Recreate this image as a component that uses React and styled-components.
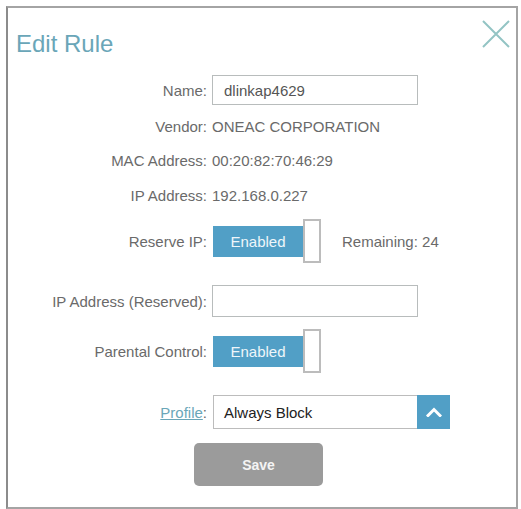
import React from 'react'
import styled, { createGlobalStyle } from 'styled-components'

const GlobalStyle = createGlobalStyle`
  html, body {
    margin: 0;
    padding: 0;
    background: #ffffff;
  }
  body {
    font-family: "Liberation Sans", Arial, sans-serif;
  }
`

const App = () => {
  return (
    <>
      <GlobalStyle />
      <Modal>
        <Header>
          <Title>Edit Rule</Title>
          <CloseButton aria-label="Close">
            <svg width="30" height="30" viewBox="0 0 30 30">
              <path d="M2 2 L28 28 M28 2 L2 28" stroke="#93c4c4" strokeWidth="2" fill="none" />
            </svg>
          </CloseButton>
        </Header>

        <Row $mt={0} $h={30}>
          <Label>Name:</Label>
          <TextInput $w={206} $h={30} defaultValue="dlinkap4629" />
        </Row>

        <Row $mt={11} $h={20}>
          <Label>Vendor:</Label>
          <Value>ONEAC CORPORATION</Value>
        </Row>

        <Row $mt={14} $h={20}>
          <Label>MAC Address:</Label>
          <Value>00:20:82:70:46:29</Value>
        </Row>

        <Row $mt={15} $h={20}>
          <Label>IP Address:</Label>
          <Value>192.168.0.227</Value>
        </Row>

        <Row $mt={14} $h={44}>
          <Label>Reserve IP:</Label>
          <Inline>
            <Toggle>
              <ToggleBar>Enabled</ToggleBar>
              <ToggleKnob />
            </Toggle>
            <Remaining>Remaining: 24</Remaining>
          </Inline>
        </Row>

        <Row $mt={22} $h={32}>
          <Label>IP Address (Reserved):</Label>
          <TextInput $w={206} $h={32} defaultValue="" />
        </Row>

        <Row $mt={12} $h={44}>
          <Label>Parental Control:</Label>
          <Inline>
            <Toggle>
              <ToggleBar>Enabled</ToggleBar>
              <ToggleKnob />
            </Toggle>
          </Inline>
        </Row>

        <Row $mt={22} $h={34}>
          <Label>
            <LinkText>Profile</LinkText>:
          </Label>
          <Select>
            <SelectText>Always Block</SelectText>
            <SelectArrow>
              <svg width="16" height="10" viewBox="0 0 16 10">
                <path d="M2 8.5 L8 2.5 L14 8.5" stroke="#ffffff" strokeWidth="3" fill="none" strokeLinecap="square" />
              </svg>
            </SelectArrow>
          </Select>
        </Row>

        <Footer>
          <SaveButton>Save</SaveButton>
        </Footer>
      </Modal>
    </>
  )
}

export default App

const Modal = styled.div`
  box-sizing: border-box;
  margin: 6px 0 0 6px;
  width: 512px;
  height: 503px;
  border: 2px solid #a4a4a4;
  border-left-color: #8c8c8c;
  background: #ffffff;
  display: flex;
  flex-direction: column;
`

const Header = styled.div`
  height: 67px;
  display: flex;
  justify-content: space-between;
  align-items: flex-start;
  padding: 11px 5px 0 8px;
  box-sizing: border-box;
`

const Title = styled.h1`
  margin: 11px 0 0 0;
  font-size: 24px;
  font-weight: 400;
  line-height: 28px;
  color: #6aa6b8;
`

const CloseButton = styled.div`
  width: 30px;
  height: 30px;
  display: flex;
`

const Row = styled.div`
  margin-top: ${p => p.$mt}px;
  height: ${p => p.$h}px;
  display: grid;
  grid-template-columns: 199px 1fr;
  column-gap: 5px;
  align-items: center;
`

const Label = styled.div`
  text-align: right;
  font-size: 15px;
  color: #6a6a6a;
  white-space: nowrap;
`

const LinkText = styled.span`
  color: #6aa6b8;
  text-decoration: underline;
`

const Value = styled.div`
  font-size: 15px;
  color: #6a6a6a;
  white-space: nowrap;
`

const TextInput = styled.input`
  box-sizing: border-box;
  width: ${p => p.$w}px;
  height: ${p => p.$h}px;
  border: 1px solid #b8bcbc;
  padding: 0 11px;
  font-family: "Liberation Sans", Arial, sans-serif;
  font-size: 15px;
  color: #555555;
  outline: none;
`

const Inline = styled.div`
  display: flex;
  align-items: center;
`

const Toggle = styled.div`
  display: flex;
  align-items: center;
  margin-left: 1px;
`

const ToggleBar = styled.div`
  width: 90px;
  height: 31px;
  background: #519fc6;
  color: #eef6fa;
  font-size: 15px;
  display: flex;
  align-items: center;
  justify-content: center;
`

const ToggleKnob = styled.div`
  box-sizing: border-box;
  width: 18px;
  height: 44px;
  background: #ffffff;
  border: 2px solid #bcbcbc;
`

const Remaining = styled.span`
  margin-left: 21px;
  font-size: 15px;
  color: #6a6a6a;
`

const Select = styled.div`
  box-sizing: border-box;
  margin-left: 1px;
  width: 237px;
  height: 34px;
  border: 1px solid #bcbcbc;
  display: flex;
  align-items: stretch;
`

const SelectText = styled.div`
  flex: 1;
  display: flex;
  align-items: center;
  padding-left: 10px;
  font-size: 15px;
  color: #222222;
`

const SelectArrow = styled.div`
  width: 33px;
  margin: -1px -1px -1px 0;
  background: #519fc6;
  display: flex;
  align-items: center;
  justify-content: center;
`

const Footer = styled.div`
  margin-top: 14px;
  padding-left: 186px;
  display: flex;
`

const SaveButton = styled.button`
  width: 129px;
  height: 43px;
  border: none;
  border-radius: 5px;
  background: #9b9b9b;
  color: #f4f4f4;
  font-family: "Liberation Sans", Arial, sans-serif;
  font-size: 14px;
  font-weight: 700;
`
